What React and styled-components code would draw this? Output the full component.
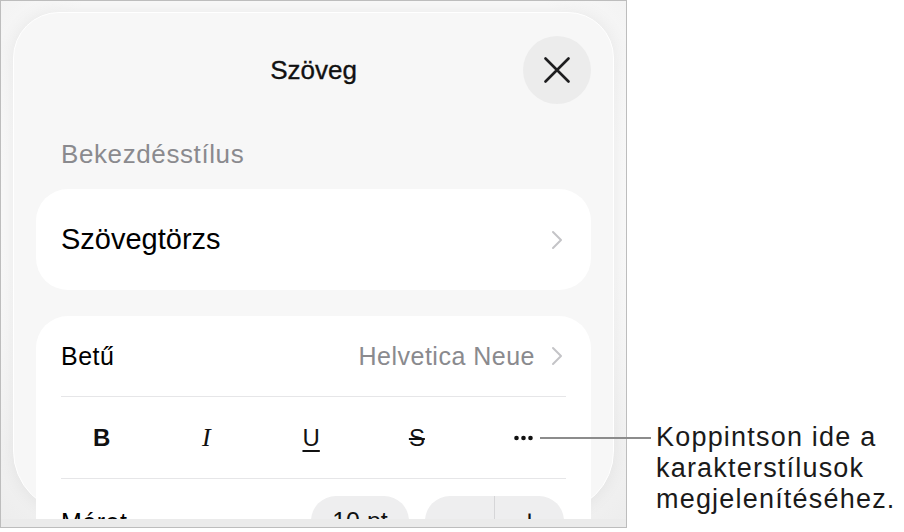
import React from "react";
import styled, { createGlobalStyle } from "styled-components";

const GlobalStyle = createGlobalStyle`
  html, body {
    margin: 0;
    padding: 0;
    background: #ffffff;
  }
  body {
    font-family: "Liberation Sans", Arial, sans-serif;
    color: #000;
  }
`;

const Chevron = () => (
  <svg width="12" height="20" viewBox="0 0 12 20" fill="none">
    <path d="M2 2 L10 10 L2 18" stroke="#c4c4c7" strokeWidth="2" strokeLinecap="round" strokeLinejoin="round" />
  </svg>
);

const CloseIcon = () => (
  <svg width="26" height="26" viewBox="0 0 26 26" fill="none">
    <path d="M1.5 1.5 L24.5 24.5 M24.5 1.5 L1.5 24.5" stroke="#1d1d1f" strokeWidth="2.6" strokeLinecap="round" />
  </svg>
);

const MoreIcon = () => (
  <svg width="19" height="6" viewBox="0 0 19 6">
    <circle cx="2.5" cy="3" r="2.3" fill="#111" />
    <circle cx="9.5" cy="3" r="2.3" fill="#111" />
    <circle cx="16.5" cy="3" r="2.3" fill="#111" />
  </svg>
);

const App = () => {
  return (
    <>
      <GlobalStyle />
      <Page>
        <Frame>
          <Viewport>
            <Sheet>
              <Header>
                <Title>Szöveg</Title>
                <CloseButton aria-label="Bezárás">
                  <CloseIcon />
                </CloseButton>
              </Header>

              <SectionLabel>Bekezdésstílus</SectionLabel>
              <Card>
                <Row $height={101} $padRight={28}>
                  <RowLabel $size={29}>Szövegtörzs</RowLabel>
                  <Chevron />
                </Row>
              </Card>

              <Card $gap={26}>
                <Row $height={80} $padRight={28}>
                  <RowLabel $size={25}>Betű</RowLabel>
                  <Value>
                    Helvetica Neue
                    <Chevron />
                  </Value>
                </Row>
                <Divider />
                <StyleRow>
                  <StyleButton $bold>B</StyleButton>
                  <StyleButton $italic>I</StyleButton>
                  <StyleButton $underline>U</StyleButton>
                  <StyleButton $strike>S</StyleButton>
                  <StyleButton>
                    <MoreIcon />
                  </StyleButton>
                </StyleRow>
                <Divider />
                <Row $height={80} $padRight={27} $top>
                  <RowLabel $size={25} $pushDown>Méret</RowLabel>
                  <Controls>
                    <Pill>10 pt</Pill>
                    <Stepper>
                      <StepButton>–</StepButton>
                      <StepButton $split>+</StepButton>
                    </Stepper>
                  </Controls>
                </Row>
              </Card>
            </Sheet>
          </Viewport>
          <BottomBand />
        </Frame>

        <Callout>
          <Leader />
          <CalloutText>
            Koppintson ide a<br />
            karakterstílusok<br />
            megjelenítéséhez.
          </CalloutText>
        </Callout>
      </Page>
    </>
  );
};

const Page = styled.div`
  position: relative;
  width: 904px;
  height: 532px;
  display: flex;
  align-items: flex-start;
`;

const Frame = styled.div`
  width: 627px;
  height: 528px;
  box-sizing: border-box;
  border: 1px solid #bdbdbd;
  display: flex;
  flex-direction: column;
  background: #f1f1f1;
`;

const Viewport = styled.div`
  height: 518px;
  overflow: hidden;
  background: radial-gradient(ellipse at 50% 40%, #f9f9f9 70%, #ededed 100%);
`;

const BottomBand = styled.div`
  flex: 1;
  background: #ebebeb;
`;

const Sheet = styled.div`
  box-sizing: border-box;
  width: 601px;
  height: 501px;
  margin: 11px 0 0 12px;
  padding: 0 22px;
  background: #f7f7f7;
  border: 1.5px solid #ffffff;
  border-radius: 46px 46px 62px 62px;
  box-shadow: 0 0 18px rgba(0, 0, 0, 0.07);
`;

const Header = styled.div`
  display: grid;
  grid-template-columns: 1fr auto 1fr;
  align-items: center;
  height: 68px;
  padding: 23px 22px 0;
  margin: 0 -22px;
`;

const Title = styled.div`
  grid-column: 2;
  font-size: 26px;
  font-weight: 400;
  color: #111;
  -webkit-text-stroke: 0.35px #111;
`;

const CloseButton = styled.button`
  grid-column: 3;
  justify-self: end;
  width: 68px;
  height: 68px;
  border: none;
  border-radius: 50%;
  background: #ececec;
  display: flex;
  align-items: center;
  justify-content: center;
  padding: 0;
`;

const SectionLabel = styled.div`
  margin-top: 36px;
  padding-left: 25px;
  font-size: 26px;
  line-height: 29px;
  letter-spacing: 0.6px;
  color: #8a8a8e;
`;

const Card = styled.div`
  margin-top: ${(p) => (p.$gap ? `${p.$gap}px` : "20px")};
  background: #ffffff;
  border-radius: 32px;
`;

const Row = styled.div`
  display: flex;
  align-items: ${(p) => (p.$top ? "flex-start" : "center")};
  justify-content: space-between;
  height: ${(p) => p.$height}px;
  box-sizing: border-box;
  padding: ${(p) => (p.$top ? "17px" : "0")} ${(p) => p.$padRight}px 0 25px;
`;

const RowLabel = styled.div`
  font-size: ${(p) => p.$size}px;
  letter-spacing: ${(p) => (p.$size < 28 ? "0.5px" : "0")};
  color: #000;
  margin-top: ${(p) => (p.$pushDown ? "12px" : "0")};
`;

const Value = styled.div`
  display: flex;
  align-items: center;
  gap: 16px;
  font-size: 25px;
  letter-spacing: 0.5px;
  color: #8a8a8e;
`;

const Divider = styled.div`
  height: 1px;
  margin: 0 25px;
  background: #e6e6e8;
`;

const StyleRow = styled.div`
  display: flex;
  align-items: center;
  justify-content: space-between;
  height: 81px;
  padding: 0 58px 0 57px;
`;

const StyleButton = styled.div`
  min-width: 14px;
  display: flex;
  justify-content: center;
  font-size: ${(p) => (p.$italic ? "26px" : "24px")};
  font-family: ${(p) =>
    p.$italic ? '"Liberation Serif", "Times New Roman", serif' : '"Liberation Sans", Arial, sans-serif'};
  font-weight: ${(p) => (p.$bold ? 700 : 400)};
  font-style: ${(p) => (p.$italic ? "italic" : "normal")};
  text-decoration: ${(p) => (p.$underline ? "underline" : p.$strike ? "line-through" : "none")};
  text-decoration-thickness: 2px;
  text-underline-offset: 4px;
  color: #111;
`;

const Controls = styled.div`
  display: flex;
  gap: 16px;
`;

const Pill = styled.div`
  width: 98px;
  height: 50px;
  border-radius: 25px;
  background: #eeeeef;
  display: flex;
  align-items: center;
  justify-content: center;
  font-size: 25px;
  color: #111;
`;

const Stepper = styled.div`
  width: 139px;
  height: 50px;
  border-radius: 25px;
  background: #eeeeef;
  display: flex;
`;

const StepButton = styled.div`
  flex: 1;
  display: flex;
  align-items: center;
  justify-content: center;
  font-size: 30px;
  color: #111;
  border-left: ${(p) => (p.$split ? "1px solid #d6d6d8" : "none")};
`;

const Callout = styled.div`
  position: absolute;
  left: 540px;
  top: 422px;
  display: flex;
  align-items: flex-start;
`;

const Leader = styled.div`
  width: 111px;
  height: 1.5px;
  margin-top: 15px;
  background: #8c8c8c;
`;

const CalloutText = styled.div`
  margin-left: 5px;
  font-size: 27px;
  line-height: 31px;
  letter-spacing: 1.2px;
  color: #1a1a1a;
`;

export default App;
